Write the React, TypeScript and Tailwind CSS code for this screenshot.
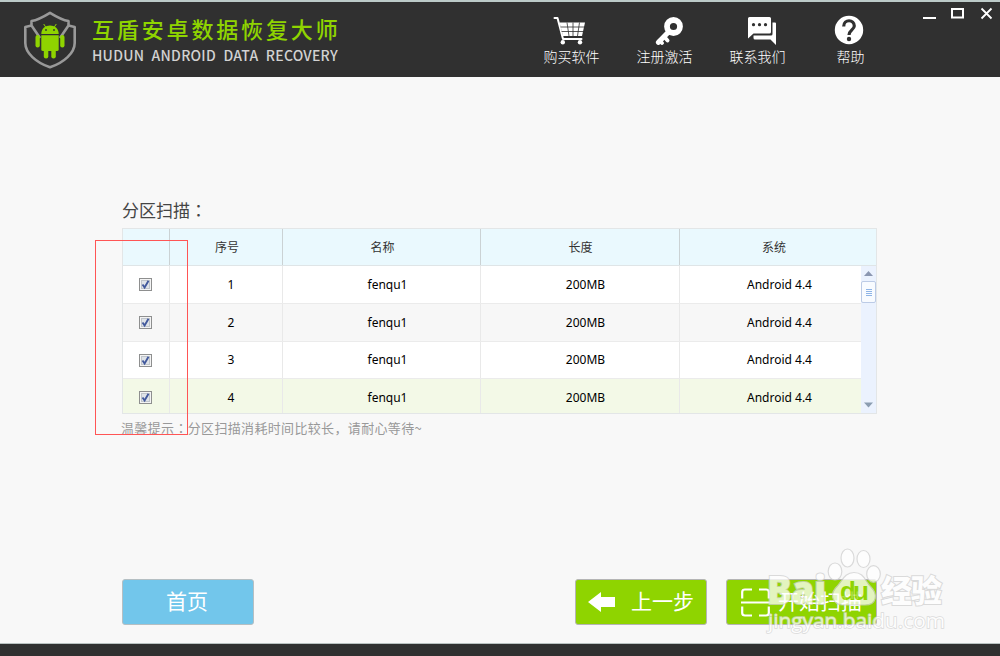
import type { ReactNode } from 'react'

// Icons

function ShieldLogo() {
  return (
    <svg width="54" height="60" viewBox="0 0 54 60" fill="none">
      <path
        d="M8.500 15.500V11C15 10 21 6.500 27 2.800C33 6.500 39 10 45.500 11V15.500M8.500 15.500L2.300 17V33C2.300 43 13 52.500 27 57.300C41 52.500 51.700 43 51.700 33V17L45.500 15.500M8.500 15.500L17 28M45.500 15.500L37 28"
        stroke="#999"
        strokeWidth="2.600"
        strokeLinejoin="round"
      />
      <g fill="#8fd400">
        <path d="M18.300 24C18.300 12.800 35.700 12.800 35.700 24Z" />
        <path d="M20.700 14L23 17.500M33.300 14L31 17.500" stroke="#8fd400" strokeWidth="1" />
        <path d="M18.300 25.200H35.700V39.500Q35.700 41 34 41H20Q18.300 41 18.300 39.500Z" />
        <rect x="12.500" y="25" width="4.300" height="12.500" rx="2.100" />
        <rect x="37.200" y="25" width="4.300" height="12.500" rx="2.100" />
        <rect x="20.800" y="38" width="4.500" height="10.500" rx="2.200" />
        <rect x="28.300" y="38" width="4.500" height="10.500" rx="2.200" />
      </g>
      <circle cx="23" cy="20" r="0.900" fill="#303030" />
      <circle cx="31" cy="20" r="0.900" fill="#303030" />
    </svg>
  )
}

function CartIcon() {
  return (
    <svg width="34" height="30" viewBox="0 0 34 30" fill="none">
      <path d="M1.500 3H4.500L10 24H28.500" stroke="#fff" strokeWidth="2" strokeLinecap="round" strokeLinejoin="round" />
      <path d="M6.500 7.500H32L29 21H10Z" fill="#fff" />
      <path d="M7.500 12H32M8.500 16.500H31M14 7.500L16 21M20 7.500V21M26.500 7.500L24.500 21" stroke="#303030" strokeWidth="0.800" />
      <circle cx="9.800" cy="27.300" r="2.200" fill="#fff" />
      <circle cx="27" cy="27.300" r="2.200" fill="#fff" />
    </svg>
  )
}

function KeyIcon() {
  return (
    <svg width="30" height="30" viewBox="0 0 30 30" fill="none">
      <circle cx="19.500" cy="11.500" r="6.500" stroke="#fff" strokeWidth="5.800" />
      <path d="M15 16.500L4.500 27.300" stroke="#fff" strokeWidth="5.200" strokeLinecap="round" />
      <path d="M10.500 22L13.500 25.500M5.500 25.500L8 28" stroke="#fff" strokeWidth="3.800" strokeLinecap="round" />
    </svg>
  )
}

function ChatIcon() {
  return (
    <svg width="30" height="30" viewBox="0 0 30 30" fill="#fff">
      <path d="M2 2H22.500Q24 2 24 3.500V17Q24 18.500 22.500 18.500H6.500L1 23.500V3.500Q1 2 2.500 2Z" />
      <path d="M25.500 7.500H28Q29 7.500 29 8.500V30L23.500 24.500H8Q6.500 24.500 6.500 23V20.500H24Q25.500 20.500 25.500 19Z" />
      <g fill="#303030">
        <circle cx="6.500" cy="9.700" r="1.600" />
        <circle cx="12.500" cy="9.700" r="1.600" />
        <circle cx="18.500" cy="9.700" r="1.600" />
      </g>
    </svg>
  )
}

function HelpIcon() {
  return (
    <svg width="30" height="30" viewBox="0 0 30 30" fill="none">
      <circle cx="15" cy="15" r="14.200" fill="#fff" />
      <path d="M9.700 11.500C9.700 3.700 20.500 4.200 20.300 11C20.200 14.700 15 15.200 15 20" stroke="#303030" strokeWidth="3.200" />
      <circle cx="15" cy="24" r="2.200" fill="#303030" />
    </svg>
  )
}

function CheckBox() {
  return (
    <svg width="13" height="13" viewBox="0 0 13 13" fill="none">
      <rect x="0.500" y="0.500" width="12" height="12" fill="#f4f4f4" stroke="#8e8f8f" />
      <rect x="2.500" y="2.500" width="8" height="8" fill="#dfe3e8" stroke="#c0c5cb" />
      <path d="M3.500 6.500L5.600 9.500L9.500 2.800" stroke="#42599c" strokeWidth="1.900" />
    </svg>
  )
}

// Header

function NavItem({ label, icon }: { label: string; icon: ReactNode }) {
  return (
    <div className="flex w-[93px] flex-col items-center">
      {icon}
      <span className="mt-px text-[14px] leading-5 font-light text-white">{label}</span>
    </div>
  )
}

function Header() {
  return (
    <header className="flex h-[77px] shrink-0 border-t-2 border-[#bccac8] bg-[#303030]">
      <div className="pt-[8px] pl-[23px]">
        <ShieldLogo />
      </div>
      <div className="ml-[15px] w-[255px] pt-[9px] whitespace-nowrap">
        <h1 className="text-[22px] leading-[34px] font-medium tracking-[2.850px] text-[#8fd400]">互盾安卓数据恢复大师</h1>
        <p className="mt-px text-[14px] leading-[18px] font-medium tracking-[0.250px] text-[#d2d2d2] [word-spacing:4px]">
          HUDUN ANDROID DATA RECOVERY
        </p>
      </div>
      <nav className="ml-[178px] flex pt-[13px]">
        <NavItem label="购买软件" icon={<span className="mr-[3px]"><CartIcon /></span>} />
        <NavItem label="注册激活" icon={<span className="ml-2"><KeyIcon /></span>} />
        <NavItem label="联系我们" icon={<span className="ml-2"><ChatIcon /></span>} />
        <NavItem label="帮助" icon={<span className="mr-1"><HelpIcon /></span>} />
      </nav>
      <div className="mt-[4px] ml-[25px]">
        <svg width="78" height="16" viewBox="0 0 78 16" fill="none" stroke="#fff" strokeWidth="2">
          <path d="M1 12H14" />
          <path d="M30 3H41V11.500H30Z" />
          <path d="M59.500 2.500L69.500 12.500M69.500 2.500L59.500 12.500" strokeWidth="1.800" />
        </svg>
      </div>
    </header>
  )
}

// Partition table

const rows = [
  { id: 1, name: 'fenqu1', size: '200MB', system: 'Android 4.4', bg: 'h-[38px] bg-white' },
  { id: 2, name: 'fenqu1', size: '200MB', system: 'Android 4.4', bg: 'h-[38px] bg-[#f7f7f7]' },
  { id: 3, name: 'fenqu1', size: '200MB', system: 'Android 4.4', bg: 'h-[37px] bg-white' },
  { id: 4, name: 'fenqu1', size: '200MB', system: 'Android 4.4', bg: 'h-[38px] bg-[#f3f9e7]' },
]

const headCell = 'flex items-center justify-center border-r border-[#cbd2d4]'
const cell = 'flex items-center justify-center border-r border-[#e9e9e9]'

function PartitionTable() {
  return (
    <div className="h-[186px] w-[755px] overflow-hidden border border-[#e3e6e7]">
      <div className="flex h-[37px] border-b border-[#dfe5e7] bg-[#eaf9fe] text-[12px] text-[#333]">
        <div className={`w-[47px] ${headCell}`} />
        <div className={`w-[113px] pl-[2px] ${headCell}`}>序号</div>
        <div className={`w-[198px] pl-[2px] ${headCell}`}>名称</div>
        <div className={`w-[199px] pl-px ${headCell}`}>长度</div>
        <div className="flex w-[188px] items-center justify-center">系统</div>
      </div>
      <div className="flex h-[147px]">
        <div className="w-[738px] overflow-hidden font-['Noto_Sans','Noto_Sans_CJK_SC',sans-serif] text-[12px] text-black">
          {rows.map((row) => (
            <div key={row.id} className={`flex border-b border-[#ebebeb] ${row.bg}`}>
              <div className={`w-[47px] pr-px ${cell}`}>
                <CheckBox />
              </div>
              <div className={`w-[113px] pl-[10px] ${cell}`}>{row.id}</div>
              <div className={`w-[198px] pl-[12px] ${cell}`}>{row.name}</div>
              <div className={`w-[199px] pl-[11px] ${cell}`}>{row.size}</div>
              <div className="flex flex-1 items-center justify-center pl-[18px]">{row.system}</div>
            </div>
          ))}
        </div>
        <div className="flex w-[15px] flex-col items-center justify-between bg-[#ebf2fe]">
          <div className="flex flex-col items-center">
            <svg width="15" height="15" viewBox="0 0 15 15">
              <path d="M3 10L7.500 5L12 10Z" fill="#8b97b1" />
            </svg>
            <div className="flex h-[22px] w-[15px] flex-col items-center justify-center gap-px rounded-xs border border-[#bccbe6] bg-[#f8fbff]">
              <i className="h-px w-1.5 bg-[#8eb4e6]" />
              <i className="h-px w-1.5 bg-[#8eb4e6]" />
              <i className="h-px w-1.5 bg-[#8eb4e6]" />
              <i className="h-px w-1.5 bg-[#8eb4e6]" />
            </div>
          </div>
          <svg width="15" height="15" viewBox="0 0 15 15">
            <path d="M3 4.500H12L7.500 9.500Z" fill="#8b9db1" />
          </svg>
        </div>
      </div>
    </div>
  )
}

// Footer buttons

function Actions() {
  return (
    <div className="flex text-[21px] text-white">
      <button className="h-[46px] w-[132px] rounded-[3px] border border-[#b5bfc3] bg-[#72c6eb] pr-[2px] pb-[2px]">首页</button>
      <button className="ml-[321px] flex h-[46px] w-[132px] items-center rounded-[3px] border border-[#b5b5b5] bg-[#8fd400] pl-[12px]">
        <svg width="28" height="20" viewBox="0 0 28 20" fill="#fff">
          <path d="M0 10L13 0V5H27V15H13V20Z" />
        </svg>
        <span className="ml-[15px] pb-[2px]">上一步</span>
      </button>
      <button className="ml-[19px] flex h-[46px] w-[151px] items-center rounded-[3px] border border-[#b5b5b5] bg-[#8fd400] pl-[14px]">
        <svg width="29" height="29" viewBox="0 0 29 29" fill="none" stroke="#fff" strokeWidth="2.200">
          <path d="M1.200 10.500V4Q1.200 1.500 4 1.500H11M18 1.500H25Q27.800 1.500 27.800 4V10.500M1.200 18.500V25Q1.200 27.500 4 27.500H11M18 27.500H25Q27.800 27.500 27.800 25V18.500M0 14.500H29" />
        </svg>
        <span className="ml-[8px] pb-[2px]">开始扫描</span>
      </button>
    </div>
  )
}

function Watermark() {
  return (
    <svg className="pointer-events-none absolute top-[540px] left-[760px] opacity-75" width="200" height="100" viewBox="0 0 200 100">
      <g fill="#fff" stroke="#d0d0d0" strokeWidth="1.200">
        <ellipse cx="75" cy="31.500" rx="6.800" ry="8.500" />
        <ellipse cx="87.500" cy="18" rx="6.500" ry="9" />
        <ellipse cx="103.500" cy="19" rx="6.500" ry="8.500" />
        <ellipse cx="113.500" cy="34" rx="6.800" ry="8.300" />
        <path d="M94 32.500C84 32.500 82 42 75.500 48C69 56 74 65 83 65H105C117 65 118 54 111 47C105 41 104 32.500 94 32.500Z" />
      </g>
      <g fill="#fff" stroke="#d0d0d0" strokeWidth="2" paintOrder="stroke">
        <text x="7" y="64" fontFamily="Open Sans" fontSize="39" fontWeight="800" textLength="59" lengthAdjust="spacingAndGlyphs">
          Bai
        </text>
        <text x="121" y="62" fontFamily="Noto Sans CJK SC" fontSize="31" fontWeight="900" textLength="61">
          经验
        </text>
        <text x="8" y="88" fontFamily="Open Sans" fontSize="20.500" strokeWidth="1.500" textLength="177" lengthAdjust="spacingAndGlyphs">
          jingyan.baidu.com
        </text>
      </g>
      <text x="80" y="60" fontFamily="Liberation Sans" fontSize="26" fontWeight="700" fill="#8fd400" textLength="29">
        du
      </text>
    </svg>
  )
}

export default function App() {
  return (
    <div className="relative flex h-[656px] w-[1000px] flex-col overflow-hidden bg-[#f8f8f8] font-['Noto_Sans_CJK_SC',sans-serif]">
      <Header />
      <main className="flex flex-1 flex-col pt-[119px] pl-[122px]">
        <h2 className="text-[17px] leading-[28px] text-[#444]">
          分区扫描<span className="font-['Noto_Sans_CJK_TC',sans-serif]" lang="zh-TW">：</span>
        </h2>
        <div className="mt-[4px]">
          <PartitionTable />
        </div>
        <p className="-ml-px mt-[4px] text-[13px] leading-[20px] tracking-[0.340px] text-[#999]">
          温馨提示<span className="font-['Noto_Sans_CJK_TC',sans-serif]" lang="zh-TW">：</span>
          分区扫描消耗时间比较长，请耐心等待~
        </p>
        <div className="mt-[141px]">
          <Actions />
        </div>
      </main>
      <footer className="h-[13px] shrink-0 border-t border-[#b9c2c1] bg-[#303030]" />

      {/* Selection marker over the checkbox column */}
      <div className="absolute top-[240px] left-[95px] h-[195px] w-[93px] border border-[#f55]" />
      <Watermark />
    </div>
  )
}
